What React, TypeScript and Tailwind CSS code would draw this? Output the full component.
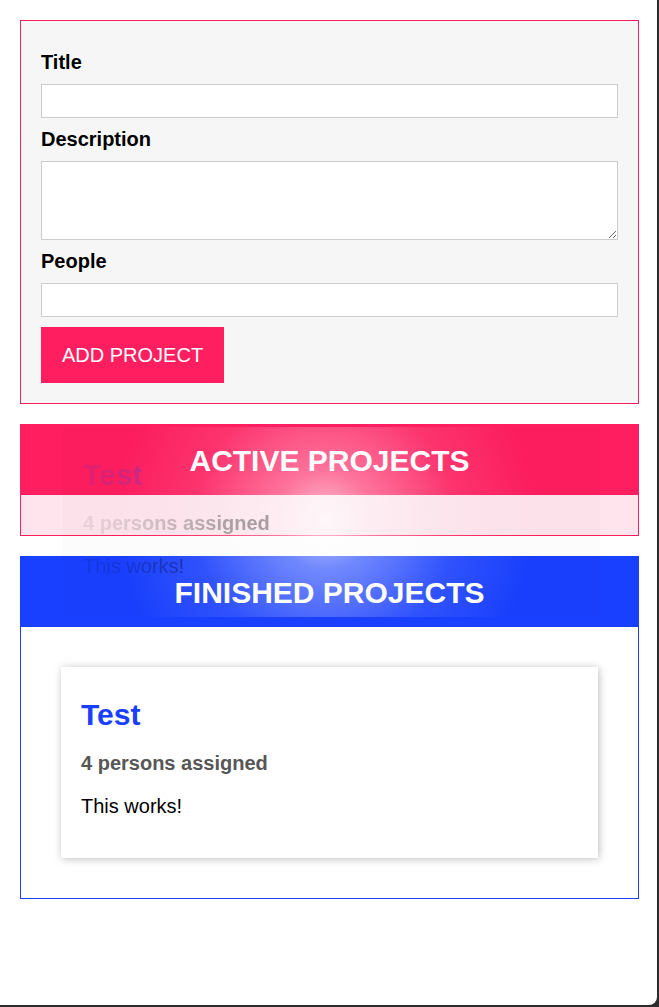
import React from 'react';

const PINK = 'border-[#ff1e60]';

function Field({ label, area }: { label: string; area?: boolean }) {
    return (
        <>
            <label className="block my-2.5 font-bold">{label}</label>
            {area ? (
                <textarea rows={3} className="block w-full h-[79px] max-w-[600px] my-2.5 px-2 py-1 bg-white border border-[#ccc] leading-[23px]" />
            ) : (
                <input type="text" className="block w-full h-[34px] max-w-[600px] my-2.5 px-2 py-1 bg-white border border-[#ccc] leading-[23px]" />
            )}
        </>
    );
}

export default function App() {
    return (
        <div className="relative flow-root min-h-[1007px] bg-white text-black text-[20px] leading-[23px] font-['Liberation_Sans',Arial,sans-serif]">
            {/* Input form */}
            <form className={`m-5 p-5 border ${PINK} bg-[#f6f6f6]`} onSubmit={e => e.preventDefault()}>
                <Field label="Title" />
                <Field label="Description" area />
                <Field label="People" />
                <button type="submit" className="block h-[56px] px-5 bg-[#ff1e60] border border-[#ff1e60] text-white leading-[23px]">ADD PROJECT</button>
            </form>

            {/* Active projects (drop target highlighted) */}
            <section className={`m-5 border ${PINK}`}>
                <header className="h-[70px] flex items-center justify-center bg-[#ff1e60]">
                    <h2 className="m-0 text-white font-bold text-[30px] leading-[35px]">ACTIVE PROJECTS</h2>
                </header>
                <ul className="m-0 p-5 list-none bg-[#ffe4ed]" />
            </section>

            {/* Finished projects */}
            <section className="m-5 border border-[#1a40ff]">
                <header className="h-[70px] flex items-center justify-center bg-[#1a40ff]">
                    <h2 className="m-0 text-white font-bold text-[30px] leading-[35px]">FINISHED PROJECTS</h2>
                </header>
                <ul className="m-0 p-5 list-none bg-white">
                    <li className="m-5 p-5 bg-white shadow-[1px_1px_8px_rgba(0,0,0,0.26)]">
                        <h2 className="my-2.5 text-[30px] leading-[35px] font-bold text-[#1a40ff]">Test</h2>
                        <h3 className="my-5 text-[20px] font-bold text-[#575757]">4 persons assigned</h3>
                        <p className="my-5">This works!</p>
                    </li>
                </ul>
            </section>

            {/* Drag ghost of the card */}
            <div className="pointer-events-none absolute left-[63px] top-[427px] h-[190px] w-[537px] bg-[rgba(0,0,0,0.012)]">
                <div className="absolute inset-0 bg-[radial-gradient(circle_at_262px_93px,rgba(255,255,255,0.72)_0px,rgba(255,255,255,0.38)_50px,rgba(255,255,255,0.1)_130px,rgba(255,255,255,0)_210px)]" />
                <div className="relative p-5 [mask-image:radial-gradient(circle_at_262px_93px,rgba(0,0,0,0.6)_0px,rgba(0,0,0,0.48)_100px,rgba(0,0,0,0.18)_200px,rgba(0,0,0,0.05)_280px)]">
                    <h2 className="my-2.5 text-[30px] leading-[35px] font-bold text-[#1a40ff]">Test</h2>
                    <h3 className="my-5 text-[20px] font-bold text-[#575757]">4 persons assigned</h3>
                    <p className="my-5">This works!</p>
                </div>
            </div>

            {/* Window frame edge */}
            <div className="pointer-events-none absolute top-0 right-0 bottom-0 w-[2px] bg-[#2b2b2b]" />
            <div className="pointer-events-none absolute left-0 right-0 bottom-0 h-[2px] bg-[#2b2b2b]" />
            <div className="pointer-events-none absolute right-0 bottom-0 w-[10px] h-[10px] bg-[#2b2b2b]">
                <div className="w-[8px] h-[8px] bg-white rounded-br-[8px]" />
            </div>
        </div>
    );
}
